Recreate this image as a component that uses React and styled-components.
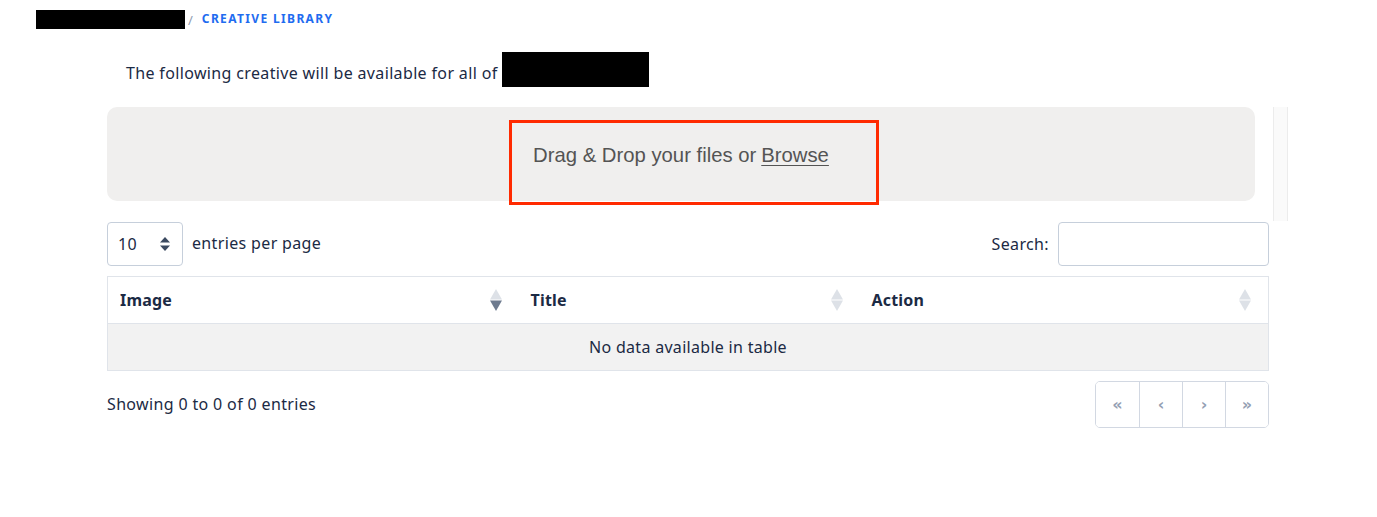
import React from 'react';
import styled, { createGlobalStyle } from 'styled-components';

const GlobalStyle = createGlobalStyle`
  html, body {
    margin: 0;
    padding: 0;
    background: #ffffff;
  }
  body {
    font-family: "Noto Sans", "Open Sans", sans-serif;
    color: #1b2a44;
    font-size: 16px;
  }
`;

const Page = styled.div`
  width: 1377px;
  height: 517px;
  box-sizing: border-box;
  padding-top: 10px;
`;

const Breadcrumb = styled.nav`
  display: flex;
  align-items: center;
  height: 19px;
  padding-left: 36px;
`;

const Redacted = styled.span`
  display: inline-block;
  background: #000;
  width: ${(p) => p.$w}px;
  height: ${(p) => p.$h}px;
`;

const Slash = styled.span`
  color: #8e9bb0;
  font-size: 13px;
  margin: 0 9px 0 3px;
`;

const Crumb = styled.a`
  color: #1f6cf0;
  font-size: 12px;
  font-weight: 700;
  letter-spacing: 1.35px;
  text-transform: uppercase;
  text-decoration: none;
  margin-top: -2px;
`;

const Intro = styled.p`
  display: flex;
  align-items: center;
  margin: 23px 0 0 126px;
  height: 35px;
  font-size: 16px;
  letter-spacing: 0.35px;
  color: #1b2a44;
`;

const IntroText = styled.span`
  padding-top: 6px;
  white-space: pre;
`;

const Content = styled.div`
  display: flex;
  flex-direction: column;
  width: 1162px;
  margin: 20px 0 0 107px;
`;

const DropRow = styled.div`
  display: flex;
  align-items: flex-start;
  width: 1181px;
`;

const DropZone = styled.div`
  position: relative;
  flex: 0 0 1148px;
  height: 94px;
  border-radius: 10px;
  background: #f0efee;
  display: flex;
  align-items: center;
  justify-content: center;
  font-family: "Liberation Sans", Arial, sans-serif;
  font-size: 20.3px;
  color: #545454;
  padding-top: 2px;
  box-sizing: border-box;
`;

const Highlight = styled.div`
  position: absolute;
  left: 402px;
  top: 13px;
  width: 370px;
  height: 85px;
  border: 3px solid #ff2a00;
  box-sizing: border-box;
`;

const Browse = styled.span`
  text-decoration: underline;
  text-underline-offset: 3px;
  text-decoration-thickness: 1px;
  margin-left: 5px;
`;

const Track = styled.div`
  margin-left: 18px;
  width: 13px;
  height: 114px;
  background: #fafafa;
  border-left: 1px solid #ececec;
  border-right: 1px solid #ececec;
`;

const Controls = styled.div`
  display: flex;
  align-items: center;
  justify-content: space-between;
  margin-top: 1px;
`;

const Group = styled.label`
  display: flex;
  align-items: center;
  gap: 9px;
  font-size: 16px;
  letter-spacing: 0.35px;
  color: #1b2a44;
`;

const GroupText = styled.span`
  margin-top: ${(p) => p.$dy || 0}px;
`;

const SelectBox = styled.div`
  width: 76px;
  height: 44px;
  box-sizing: border-box;
  border: 1px solid #c6cfdb;
  border-radius: 4px;
  display: flex;
  align-items: center;
  justify-content: space-between;
  padding: 0 12px 0 10px;
  font-size: 16px;
  color: #1b2a44;
`;

const SearchInput = styled.input`
  width: 211px;
  height: 44px;
  box-sizing: border-box;
  border: 1px solid #c6cfdb;
  border-radius: 4px;
  outline: none;
`;

const Table = styled.table`
  width: 100%;
  margin-top: 10px;
  border-collapse: collapse;
  border: 1px solid #e0e4ea;
  table-layout: fixed;
`;

const Th = styled.th`
  position: relative;
  box-sizing: border-box;
  text-align: left;
  height: 47px;
  padding: 0 12px;
  font-size: 16px;
  font-weight: 700;
  letter-spacing: 0.2px;
  color: #1b2a44;
  width: ${(p) => (p.$w ? `${p.$w}px` : 'auto')};
  border-bottom: 1px solid #e0e4ea;
`;

const SortIcon = styled.svg`
  position: absolute;
  right: 17px;
  top: 50%;
  transform: translateY(-50%);
`;

const Td = styled.td`
  height: 46px;
  padding: 0;
  background: #f2f2f2;
  text-align: center;
  font-size: 16px;
  letter-spacing: 0.3px;
  color: #1b2a44;
`;

const Footer = styled.div`
  display: flex;
  align-items: center;
  justify-content: space-between;
  margin-top: 10px;
`;

const Info = styled.div`
  font-size: 16px;
  letter-spacing: 0.35px;
  color: #1b2a44;
  padding-bottom: 2px;
`;

const Pager = styled.div`
  display: flex;
  border: 1px solid #d2d8e2;
  border-radius: 5px;
  overflow: hidden;
`;

const PageBtn = styled.button`
  width: 43px;
  height: 45px;
  background: #fff;
  border: none;
  border-left: ${(p) => (p.$first ? 'none' : '1px solid #d2d8e2')};
  color: #94a0b3;
  font-size: 16px;
  font-weight: 700;
  font-family: "DejaVu Sans", sans-serif;
  padding: 0;
`;

const Sort = ({ active }) => (
  <SortIcon width="12" height="22" viewBox="0 0 12 22">
    <path d="M6 0 L12 10.5 L0 10.5 Z" fill="#dde1e7" />
    <path d="M0 11.5 L12 11.5 L6 22 Z" fill={active ? '#6e7b8f' : '#dde1e7'} />
  </SortIcon>
);

const Arrows = () => (
  <svg width="10" height="14" viewBox="0 0 10 14">
    <path d="M5 0 L10 5.5 L0 5.5 Z" fill="#3b4a60" />
    <path d="M0 8.5 L10 8.5 L5 14 Z" fill="#3b4a60" />
  </svg>
);

export default function App() {
  return (
    <Page>
      <GlobalStyle />
      <Breadcrumb>
        <Redacted $w={149} $h={19} />
        <Slash>/</Slash>
        <Crumb href="#">Creative Library</Crumb>
      </Breadcrumb>

      <Intro>
        <IntroText>The following creative will be available for all of </IntroText>
        <Redacted $w={147} $h={35} />
      </Intro>

      <Content>
        <DropRow>
          <DropZone>
            Drag &amp; Drop your files or<Browse>Browse</Browse>
            <Highlight />
          </DropZone>
          <Track />
        </DropRow>

        <Controls>
          <Group>
            <SelectBox>
              <span>10</span>
              <Arrows />
            </SelectBox>
            <GroupText $dy={-3}>entries per page</GroupText>
          </Group>
          <Group>
            Search:
            <SearchInput type="search" />
          </Group>
        </Controls>

        <Table>
          <thead>
            <tr>
              <Th $w={411}>
                Image
                <Sort active />
              </Th>
              <Th $w={341}>
                Title
                <Sort />
              </Th>
              <Th>
                Action
                <Sort />
              </Th>
            </tr>
          </thead>
          <tbody>
            <tr>
              <Td colSpan={3}>No data available in table</Td>
            </tr>
          </tbody>
        </Table>

        <Footer>
          <Info>Showing 0 to 0 of 0 entries</Info>
          <Pager>
            <PageBtn $first>«</PageBtn>
            <PageBtn>‹</PageBtn>
            <PageBtn>›</PageBtn>
            <PageBtn>»</PageBtn>
          </Pager>
        </Footer>
      </Content>
    </Page>
  );
}
